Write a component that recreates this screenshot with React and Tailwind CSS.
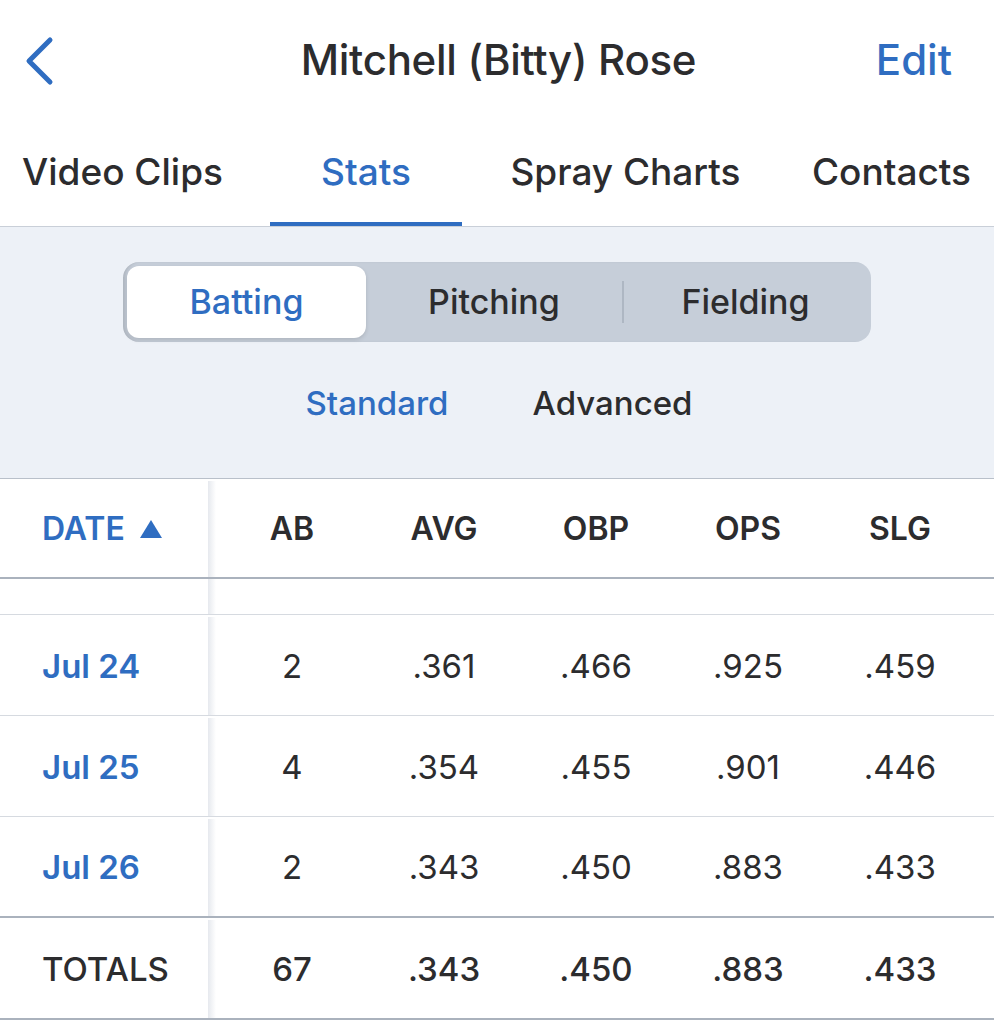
import React from "react";

const BLUE = "text-[#2f6dc1]";

const rows = [
  ["Jul 24", "2", ".361", ".466", ".925", ".459"],
  ["Jul 25", "4", ".354", ".455", ".901", ".446"],
  ["Jul 26", "2", ".343", ".450", ".883", ".433"],
];

function Shadow() {
  return <div className="w-[8px] self-stretch bg-gradient-to-r from-[#e6e9ee] to-white" />;
}

export default function App() {
  return (
    <div className="w-[994px] h-[1024px] bg-white overflow-hidden text-[#2c2c2e]" style={{ fontFamily: "Inter, 'Noto Sans', sans-serif" }}>
      {/* Header */}
      <div className="relative h-[120px] flex items-center justify-center">
        <svg className="absolute left-[22px] top-[36px]" width="34" height="50" viewBox="0 0 34 50">
          <path d="M28 4 L7 25 L28 46" fill="none" stroke="#2f6dc1" strokeWidth="5" strokeLinecap="round" strokeLinejoin="round" />
        </svg>
        <div className="text-[42px] font-medium tracking-[-0.3px] leading-none pl-[3px]">Mitchell (Bitty) Rose</div>
        <div className={`absolute right-[42px] top-0 h-full flex items-center text-[42px] font-medium leading-none ${BLUE}`}>Edit</div>
      </div>

      {/* Tabs */}
      <div className="h-[107px] flex border-b border-[#c9cfd8] text-[37px] font-medium leading-none">
        <div className="w-[270px] flex items-center pl-[22px] border-b-[4px] border-transparent">Video Clips</div>
        <div className={`w-[192px] flex items-center justify-center border-b-[4px] border-[#2f6dc1] ${BLUE}`}>Stats</div>
        <div className="w-[327px] flex items-center justify-center border-b-[4px] border-transparent">Spray Charts</div>
        <div className="w-[205px] flex items-center justify-center border-b-[4px] border-transparent">Contacts</div>
      </div>

      {/* Gray band */}
      <div className="h-[252px] bg-[#edf1f7] border-b border-[#b9c0ca] pt-[35px]">
        <div className="ml-[123px] w-[748px] h-[80px] rounded-[16px] bg-[#c6ced9] p-[4px] flex items-center shadow-[inset_3px_0_3px_-1px_rgba(0,0,0,0.12)] text-[34px] font-medium leading-none">
          <div className={`w-[239px] h-[72px] rounded-[12px] bg-white shadow-[0_2px_4px_rgba(0,0,0,0.12)] flex items-center justify-center ${BLUE}`}>Batting</div>
          <div className="w-[256px] flex items-center justify-center">Pitching</div>
          <div className="w-[2px] h-[42px] bg-[#aeb7c3]" />
          <div className="flex-1 flex items-center justify-center">Fielding</div>
        </div>
        <div className="mt-[36px] h-[50px] flex items-center justify-center gap-[84px] text-[33px] font-medium leading-none pl-[4px]">
          <span className={BLUE}>Standard</span>
          <span>Advanced</span>
        </div>
      </div>

      {/* Table header */}
      <div className="h-[100px] flex items-stretch border-b-2 border-[#aab2bd] text-[32px] font-semibold leading-none pt-[2px]">
        <div className={`w-[208px] flex items-center pl-[42px] gap-[14px] ${BLUE}`}>
          <span>DATE</span>
          <svg width="24" height="20" viewBox="0 0 24 20"><path d="M12 1 L23 19 L1 19 Z" fill="#2f6dc1" /></svg>
        </div>
        <Shadow />
        {["AB", "AVG", "OBP", "OPS", "SLG"].map((h) => (
          <div key={h} className="w-[152px] flex items-center justify-center">{h}</div>
        ))}
      </div>

      {/* Empty spacer row */}
      <div className="h-[36px] flex border-b border-[#d6dae0]">
        <div className="w-[208px]" />
        <Shadow />
      </div>

      {rows.map((r, i) => (
        <div key={r[0]} className={`h-[101px] flex items-stretch text-[33px] leading-none pt-[2px] ${i === rows.length - 1 ? "border-b-2 border-[#aab2bd]" : "border-b border-[#d6dae0]"}`}>
          <div className={`w-[208px] flex items-center pl-[42px] font-semibold ${BLUE}`}>{r[0]}</div>
          <Shadow />
          {r.slice(1).map((v, j) => (
            <div key={j} className="w-[152px] flex items-center justify-center font-normal">{v}</div>
          ))}
        </div>
      ))}

      {/* Totals */}
      <div className="h-[102px] flex items-stretch border-b-2 border-[#aab2bd] text-[33px] font-medium leading-none pt-[2px]">
        <div className="w-[208px] flex items-center pl-[42px]">TOTALS</div>
        <Shadow />
        {["67", ".343", ".450", ".883", ".433"].map((v, j) => (
          <div key={j} className="w-[152px] flex items-center justify-center">{v}</div>
        ))}
      </div>
    </div>
  );
}
